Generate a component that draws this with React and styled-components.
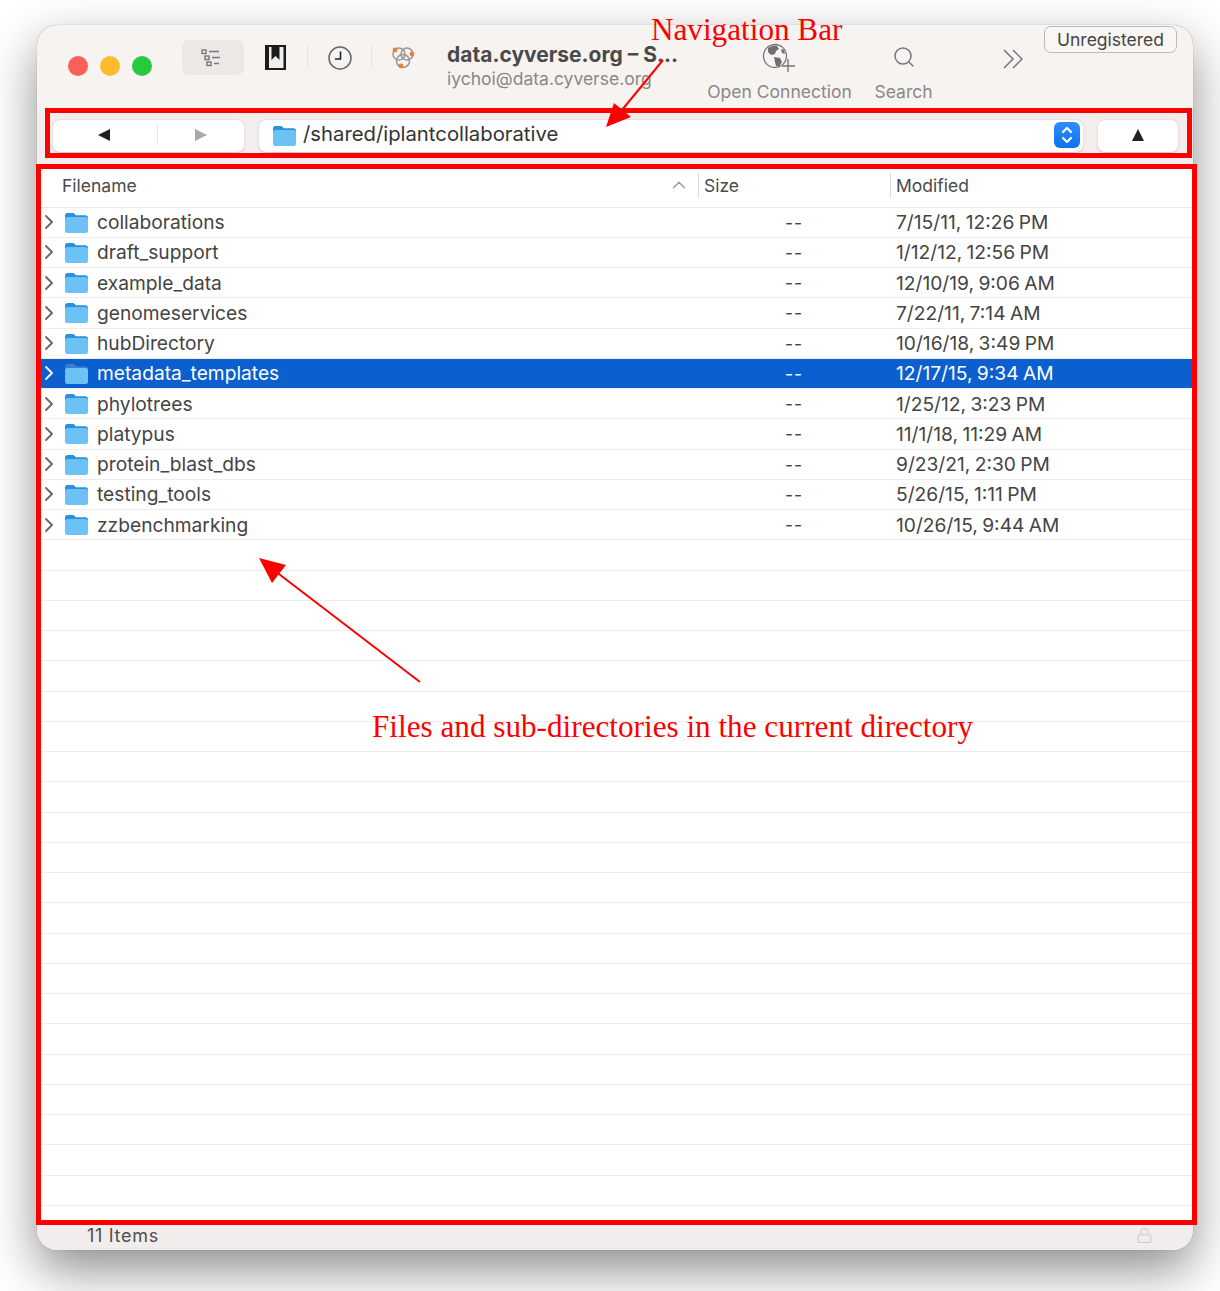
import React from 'react'
import styled, { createGlobalStyle } from 'styled-components'
import { ChevronRight, ChevronUp, Search as SearchIcon, Lock } from 'lucide-react'

const GlobalStyle = createGlobalStyle`
  * { box-sizing: border-box; }
  html, body { margin: 0; background: #fff; }
  body { font-family: Inter, "Noto Sans", sans-serif; color: #3c3c3c; }
`

const Page = styled.div`
  position: relative;
  width: 1220px;
  height: 1291px;
  padding: 25px 27px 0 37px;
  overflow: hidden;
`

const Window = styled.div`
  width: 1156px;
  height: 1225px;
  border-radius: 20px;
  background: #f7f3f1;
  box-shadow: 0 0 1px rgba(0, 0, 0, .45), 0 20px 50px rgba(0, 0, 0, .45);
  display: flex;
  flex-direction: column;
  overflow: hidden;
`

const Toolbar = styled.div`
  position: relative;
  height: 84px;
  flex: none;
  display: flex;
  align-items: flex-start;
  padding: 15px 0 0 31px;
`

const Lights = styled.div`
  display: flex;
  gap: 12px;
  margin: 16px 30px 0 0;
`

const Light = styled.span`
  width: 20px;
  height: 20px;
  border-radius: 50%;
  background: ${p => p.$color};
`

const SideButton = styled.div`
  width: 62px;
  height: 35px;
  border-radius: 7px;
  background: #ece8e6;
  display: flex;
  align-items: center;
  justify-content: center;
  padding-right: 4px;
  margin-right: 21px;
`

const IconSlot = styled.div`
  display: flex;
  margin: ${p => p.$margin};
`

const Divider = styled.span`
  width: 1px;
  height: 24px;
  background: #e8e4e2;
  margin: ${p => p.$margin};
`

const TitleBlock = styled.div`
  width: 260px;
  margin-top: 2px;
`

const Title = styled.div`
  font-size: 21px;
  font-weight: 700;
  line-height: 26px;
  color: #4a4a4a;
  white-space: nowrap;
`

const Subtitle = styled.div`
  font-size: 17.5px;
  line-height: 22px;
  color: #8a8886;
  white-space: nowrap;
`

const ToolItem = styled.div`
  width: ${p => p.$width}px;
  margin-right: ${p => p.$gap || 0}px;
  display: flex;
  flex-direction: column;
  align-items: center;
  color: #8a8886;
  font-size: 17.5px;
  gap: 8px;
  height: 62px;
  justify-content: flex-end;
  white-space: nowrap;
`

const ToolIcon = styled.div`
  flex: 1;
  display: flex;
  align-items: center;
  justify-content: center;
  padding-top: ${p => p.$top}px;
  color: #777;
`

const Badge = styled.div`
  position: absolute;
  top: 1px;
  right: 16px;
  width: 133px;
  height: 27px;
  border: 1.5px solid #bdb9b7;
  border-radius: 7px;
  font-size: 17.5px;
  color: #444;
  display: flex;
  align-items: center;
  justify-content: center;
  background: #f9f6f4;
`

const NavBar = styled.div`
  height: 56px;
  flex: none;
  display: flex;
  align-items: flex-start;
  padding: 11px 15px 0 16px;
  gap: 15px;
  background: #f3eeed;
`

const BackForward = styled.div`
  width: 191px;
  height: 32px;
  border-radius: 7px;
  background: #fff;
  box-shadow: 0 .5px 2px rgba(0, 0, 0, .2);
  display: grid;
  grid-template-columns: 104px 1fr;
  align-items: center;
  padding-bottom: 2px;
`

const NavCell = styled.div`
  height: 20px;
  display: flex;
  align-items: center;
  justify-content: center;
  border-left: ${p => p.$split ? '1px solid #e2e2e2' : 'none'};
  padding-right: ${p => p.$pad || 0}px;
`

const Triangle = styled.span`
  width: 0;
  height: 0;
  border-top: 6.5px solid transparent;
  border-bottom: 6.5px solid transparent;
  ${p => p.$dir === 'left' ? `border-right: 12px solid ${p.$color};` : `border-left: 12px solid ${p.$color};`}
`

const PathField = styled.div`
  width: 824px;
  height: 32px;
  border-radius: 7px;
  background: #fff;
  box-shadow: 0 .5px 2px rgba(0, 0, 0, .2);
  display: flex;
  align-items: center;
  padding: 0 3px 2px 13px;
  gap: 6px;
  font-size: 20.3px;
  color: #333;
`

const PathText = styled.span`
  flex: 1;
  padding-bottom: 3px;
`

const Stepper = styled.div`
  width: 26px;
  height: 26px;
  border-radius: 6px;
  background: linear-gradient(#2f8dfb, #0a74f0);
  display: flex;
  align-items: center;
  justify-content: center;
`

const UpButton = styled.div`
  width: 80px;
  height: 32px;
  border-radius: 7px;
  background: #fff;
  box-shadow: 0 .5px 2px rgba(0, 0, 0, .2);
  display: flex;
  align-items: center;
  justify-content: center;
  padding-bottom: 3px;
`

const UpTriangle = styled.span`
  width: 0;
  height: 0;
  border-left: 6.5px solid transparent;
  border-right: 6.5px solid transparent;
  border-bottom: 12px solid #222;
`

const Table = styled.div`
  flex: 1;
  min-height: 0;
  background: #fff;
  overflow: hidden;
`

const HeaderRow = styled.div`
  height: 43.5px;
  margin-top: -1px;
  display: grid;
  grid-template-columns: 661px 192px 1fr;
  align-items: center;
  border-bottom: 1.5px solid #e9e9e9;
  font-size: 17.5px;
  color: #4a4a4a;
`

const HeaderCell = styled.div`
  height: 26px;
  display: flex;
  align-items: center;
  justify-content: space-between;
  padding: 0 8px 0 ${p => p.$pad}px;
  border-left: ${p => p.$split ? '1px solid #dedede' : 'none'};
`

const Row = styled.div`
  height: 30.25px;
  display: grid;
  grid-template-columns: 661px 192px 1fr;
  align-items: center;
  border-bottom: 1.5px solid #ededed;
  font-size: 19.2px;
  background: ${p => p.$selected ? '#0b5fce' : 'transparent'};
  color: ${p => p.$selected ? '#fff' : '#444'};
`

const NameCell = styled.div`
  display: flex;
  align-items: center;
  padding-left: 4px;
`

const Disclosure = styled.span`
  width: 15px;
  display: flex;
  justify-content: center;
  color: ${p => p.$selected ? '#fff' : '#666'};
  margin-right: 8px;

  svg {
    flex: none;
  }
`

const FileName = styled.span`
  margin-left: 8px;
`

const SizeCell = styled.div`
  text-align: center;
  font-size: 17.5px;
  letter-spacing: 1px;
`

const DateCell = styled.div`
  padding-left: 6px;
  word-spacing: -1px;
`

const StatusBar = styled.div`
  height: 26px;
  flex: none;
  display: flex;
  align-items: center;
  justify-content: space-between;
  padding: 0 40px 4px 50px;
  background: #f2eded;
  font-size: 18px;
  letter-spacing: .7px;
  color: #4f4f4f;
`

const Overflow = styled.svg`
  flex: none;
  margin-top: 9px;
`

const RedBox = styled.div`
  position: absolute;
  left: ${p => p.$left}px;
  top: ${p => p.$top}px;
  width: ${p => p.$width}px;
  height: ${p => p.$height}px;
  border: 5px solid #fe0000;
`

const Note = styled.div`
  position: absolute;
  left: ${p => p.$left}px;
  top: ${p => p.$top}px;
  font-family: "Liberation Serif", serif;
  font-size: 31.2px;
  color: #fe0000;
  white-space: nowrap;
  line-height: 1;
`

const Arrows = styled.svg`
  position: absolute;
  left: 0;
  top: 0;
  pointer-events: none;
`

const FolderIcon = ({ size = 25, dark }) => (
  <svg width={size} height={size * 0.92} viewBox="0 0 25 23">
    <path d="M1 4.500C1 3 2 2 3.400 2h5.200c1 0 1.500.4 2.200 1.100l1 1.100H21.500C23 4.200 24 5.200 24 6.700V12H1z" fill={dark ? '#3a7fd0' : '#2a91dc'} />
    <path d="M1 8.300C1 7 2 6 3.300 6h18.400C23 6 24 7 24 8.300v11.400c0 1.300-1 2.300-2.300 2.300H3.300C2 22 1 21 1 19.700z" fill="#6cc1f5" />
  </svg>
)

const TreeIcon = () => (
  <svg width="22" height="20" viewBox="0 0 22 20" fill="none" stroke="#777" strokeWidth="1.400">
    <rect x="2" y="2" width="4" height="3.500" />
    <path d="M9 3.500h10" />
    <rect x="5" y="8" width="4" height="3.500" />
    <path d="M12 9.500h8" />
    <rect x="7" y="14" width="4" height="3.500" />
    <path d="M14 15.500h5" />
  </svg>
)

const BookmarkIcon = () => (
  <svg width="21" height="25" viewBox="0 0 21 25">
    <rect x="0" y="0" width="21" height="25" fill="#1c1c1c" />
    <rect x="4" y="2" width="14.500" height="21" fill="#f0eeee" />
    <path d="M6.500 0h8v15l-4-4-4 4z" fill="#1c1c1c" />
  </svg>
)

const ClockIcon = () => (
  <svg width="24" height="24" viewBox="0 0 24 24">
    <circle cx="12" cy="12" r="11" fill="#f4f4f2" stroke="#666" strokeWidth="1.500" />
    <path d="M12.500 5.500v7.500H7" fill="none" stroke="#222" strokeWidth="1.600" />
  </svg>
)

const BonjourIcon = () => (
  <svg width="26" height="24" viewBox="0 0 26 24" fill="none">
    <circle cx="9" cy="8" r="6" stroke="#9a9694" strokeWidth="1.500" />
    <circle cx="17" cy="8" r="6" stroke="#9a9694" strokeWidth="1.500" />
    <circle cx="13" cy="15" r="6.500" stroke="#9a9694" strokeWidth="1.500" />
    <circle cx="5" cy="4" r="2.400" fill="#e8803c" />
    <circle cx="22" cy="8" r="2.400" fill="#e8803c" />
    <circle cx="11" cy="20" r="2.400" fill="#e8803c" />
  </svg>
)

const GlobePlusIcon = () => (
  <svg width="36" height="30" viewBox="0 0 36 30" fill="none">
    <circle cx="13" cy="13" r="11.500" stroke="#777" strokeWidth="1.300" />
    <path d="M6 5c3-2 7-3 9-2l2 3-3 2-1 3-4 1-3-3zM12 14l6 1 2 4-3 5-3-1-1-4zM19 6l3 1 1 4-3-1z" fill="#6f6f6f" />
    <path d="M26 16v13M20 23h13" stroke="#777" strokeWidth="1.400" />
  </svg>
)

const StepperIcon = () => (
  <svg width="14" height="20" viewBox="0 0 14 20" fill="none" stroke="#fff" strokeWidth="2.200" strokeLinecap="round" strokeLinejoin="round">
    <path d="M3 7l4-4 4 4M3 13l4 4 4-4" />
  </svg>
)

const rows = [
  ['collaborations', '7/15/11, 12:26 PM'],
  ['draft_support', '1/12/12, 12:56 PM'],
  ['example_data', '12/10/19, 9:06 AM'],
  ['genomeservices', '7/22/11, 7:14 AM'],
  ['hubDirectory', '10/16/18, 3:49 PM'],
  ['metadata_templates', '12/17/15, 9:34 AM'],
  ['phylotrees', '1/25/12, 3:23 PM'],
  ['platypus', '11/1/18, 11:29 AM'],
  ['protein_blast_dbs', '9/23/21, 2:30 PM'],
  ['testing_tools', '5/26/15, 1:11 PM'],
  ['zzbenchmarking', '10/26/15, 9:44 AM'],
]

const App = () => (
  <Page>
    <GlobalStyle />
    <Window>
      <Toolbar>
        <Lights>
          <Light $color="#fc5f57" />
          <Light $color="#fdbb2e" />
          <Light $color="#27c93f" />
        </Lights>
        <SideButton><TreeIcon /></SideButton>
        <IconSlot $margin="5px 21px 0 0"><BookmarkIcon /></IconSlot>
        <Divider $margin="5px 20px 0 0" />
        <IconSlot $margin="6px 19px 0 0"><ClockIcon /></IconSlot>
        <Divider $margin="5px 18px 0 0" />
        <IconSlot $margin="6px 31px 0 0"><BonjourIcon /></IconSlot>
        <TitleBlock>
          <Title>data.cyverse.org – S...</Title>
          <Subtitle>iychoi@data.cyverse.org</Subtitle>
        </TitleBlock>
        <ToolItem $width={145} $gap={23}>
          <ToolIcon $top={5}><GlobePlusIcon /></ToolIcon>
          Open Connection
        </ToolItem>
        <ToolItem $width={57} $gap={71}>
          <ToolIcon $top={0}><SearchIcon size={24} strokeWidth={1.500} /></ToolIcon>
          Search
        </ToolItem>
        <Overflow width="20" height="20" viewBox="0 0 20 20" fill="none" stroke="#777" strokeWidth="1.500">
          <path d="M1 1l9 9-9 9M10 1l9 9-9 9" />
        </Overflow>
        <Badge>Unregistered</Badge>
      </Toolbar>
      <NavBar>
        <BackForward>
          <NavCell $pad={2}><Triangle $dir="left" $color="#1f1f1f" /></NavCell>
          <NavCell $split><Triangle $dir="right" $color="#a9a9a9" /></NavCell>
        </BackForward>
        <PathField>
          <FolderIcon />
          <PathText>/shared/iplantcollaborative</PathText>
          <Stepper><StepperIcon /></Stepper>
        </PathField>
        <UpButton><UpTriangle /></UpButton>
      </NavBar>
      <Table>
        <HeaderRow>
          <HeaderCell $pad={25}>Filename<ChevronUp size={22} color="#999" strokeWidth={1.500} /></HeaderCell>
          <HeaderCell $split $pad={5}>Size</HeaderCell>
          <HeaderCell $split $pad={5}>Modified</HeaderCell>
        </HeaderRow>
        {rows.map(([name, date]) => {
          const selected = name === 'metadata_templates'
          return (
            <Row key={name} $selected={selected}>
              <NameCell>
                <Disclosure $selected={selected}><ChevronRight size={24} strokeWidth={1.800} /></Disclosure>
                <FolderIcon dark={selected} />
                <FileName>{name}</FileName>
              </NameCell>
              <SizeCell>--</SizeCell>
              <DateCell>{date}</DateCell>
            </Row>
          )
        })}
        {Array.from({ length: 23 }, (_, i) => <Row key={i} />)}
      </Table>
      <StatusBar>
        11 Items
        <Lock size={17} color="#cfcbc9" strokeWidth={1.500} />
      </StatusBar>
    </Window>
    <RedBox $left={45} $top={108} $width={1147} $height={50} />
    <RedBox $left={36} $top={164} $width={1161} $height={1061} />
    <Note $left={651} $top={14}>Navigation Bar</Note>
    <Note $left={372} $top={711}>Files and sub-directories in the current directory</Note>
    <Arrows width="1220" height="1291" viewBox="0 0 1220 1291">
      <path d="M663 60L622 110" stroke="#fe0000" strokeWidth="2" />
      <path d="M606 127L614 103L631 117z" fill="#fe0000" />
      <path d="M420 682L275 571" stroke="#fe0000" strokeWidth="2" />
      <path d="M259 558L286 565L272 583z" fill="#fe0000" />
    </Arrows>
  </Page>
)

export default App
